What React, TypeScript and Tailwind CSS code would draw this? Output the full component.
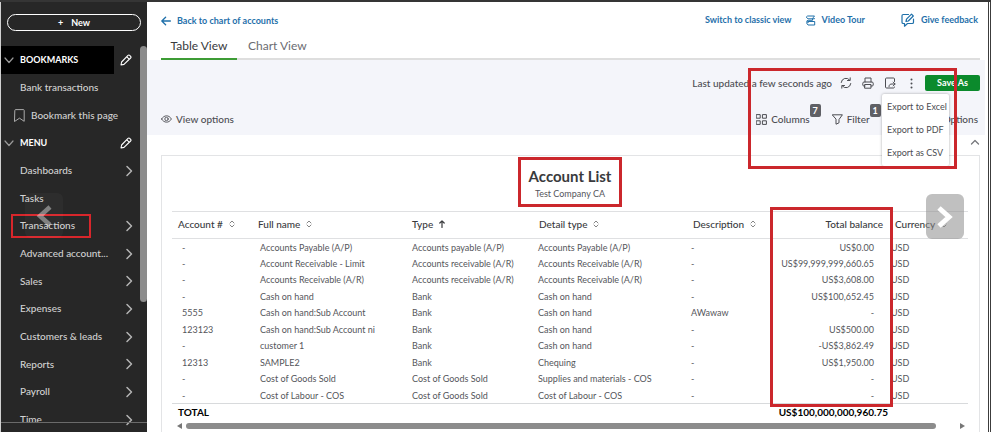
import type { ReactNode } from 'react';

type SvgProps = { className?: string; children: ReactNode; box?: string };

function Svg({ className = '', children, box = '0 0 16 16' }: SvgProps) {
  return (
    <svg
      viewBox={box}
      fill="none"
      stroke="currentColor"
      strokeLinecap="round"
      strokeLinejoin="round"
      aria-hidden="true"
      className={`shrink-0 ${className}`}
    >
      {children}
    </svg>
  );
}

const ChevronRight = () => (
  <Svg className="size-3 text-[#b4b4b4]" box="0 0 12 12">
    <path d="M4 1.5 8.5 6 4 10.5" strokeWidth="1.5" />
  </Svg>
);

const ChevronDown = () => (
  <Svg className="size-[10px] text-[#9a9a9a]" box="0 0 10 10">
    <path d="M1 3 5 7.5 9 3" strokeWidth="1.2" />
  </Svg>
);

const Pencil = () => (
  <Svg className="size-3 text-white" box="0 0 12 12">
    <path d="M1 11 1.6 8 8 1.4c.5-.5 1.2-.5 1.7 0l.9.9c.5.5.5 1.2 0 1.7L4 10.4ZM6.8 2.8l2.4 2.4" strokeWidth="1.1" />
  </Svg>
);

const SortIcon = () => (
  <Svg className="h-2 w-[6px] text-[#777]" box="0 0 6 8">
    <path d="M1 3 3 1l2 2M1 5l2 2 2-2" strokeWidth="0.9" />
  </Svg>
);

const rowHeight = 'h-7 nth-[3n]:h-[27px]';

function Heading({ label, dark }: { label: string; dark?: boolean }) {
  return (
    <li className={`${rowHeight} flex items-center justify-between pr-2`}>
      <button
        className={`flex h-full w-[113px] items-center gap-[6px] pl-[3px] text-[9px] font-bold text-white ${dark ? 'bg-black' : ''}`}
      >
        <ChevronDown />
        {label}
      </button>
      <button aria-label={`Edit ${label.toLowerCase()}`}>
        <Pencil />
      </button>
    </li>
  );
}

type ItemProps = { label: string; arrow?: boolean; marked?: boolean };

function Item({ label, arrow = true, marked }: ItemProps) {
  return (
    <li className={`${rowHeight} relative flex items-center pr-[5px] pb-[1px] pl-[19px]`}>
      <a href="#" className="flex flex-1 items-center justify-between">
        {label}
        {arrow && <ChevronRight />}
      </a>
      {marked && (
        <span className="pointer-events-none absolute top-[2px] left-[10px] h-6 w-20 border-2 border-[#d8262b]" />
      )}
    </li>
  );
}

function Sidebar() {
  return (
    <aside className="relative flex w-[147px] shrink-0 flex-col border-l border-[#d0d0d0] bg-[#272727] text-[10px] font-medium text-[#d2d2d2]">
      <div className="flex h-11 shrink-0 items-start px-[6px] pt-3">
        <button className="flex h-[17px] w-full items-center justify-center gap-2 rounded-full border border-white text-[9px] font-bold text-white">
          <span>+</span>
          <span>New</span>
        </button>
      </div>
      <div className="flex min-h-0 flex-1">
        <ul className="min-w-0 flex-1 overflow-hidden">
          <Heading label="BOOKMARKS" dark />
          <Item label="Bank transactions" arrow={false} />
          <li className={`${rowHeight} flex items-center pl-[13px]`}>
            <a href="#" className="flex items-center gap-[6px]">
              <Svg className="h-[13px] w-[11px] text-[#aaa]" box="0 0 11 13">
                <path d="M.8 1.3c0-.4.3-.7.7-.7h8c.4 0 .7.3.7.7v11L5.500 9.200.8 12.300Z" />
              </Svg>
              Bookmark this page
            </a>
          </li>
          <Heading label="MENU" />
          <Item label="Dashboards" />
          <Item label="Tasks" arrow={false} />
          <Item label="Transactions" marked />
          <Item label="Advanced account..." />
          <Item label="Sales" />
          <Item label="Expenses" />
          <Item label="Customers & leads" />
          <Item label="Reports" />
          <Item label="Payroll" />
          <Item label="Time" />
        </ul>
        <div className="w-[7px]">
          <div className="h-64 rounded-full bg-[#8c8c8c]" />
        </div>
      </div>
      <span className="pointer-events-none absolute inset-x-0 bottom-[9px] border-t border-[#6a6a6a]" />
      <button
        aria-label="Previous"
        className="absolute top-[191px] left-6 flex h-[45px] w-[38px] items-center justify-center rounded-md bg-white/3 text-white/40"
      >
        <Svg className="size-6" box="0 0 24 24">
          <path d="M18 3 8 12l10 9" strokeWidth="4.500" strokeLinecap="butt" strokeLinejoin="miter" />
        </Svg>
      </button>
    </aside>
  );
}

function TopBar() {
  return (
    <header className="bg-white pr-2 pl-[14px]">
      <div className="flex h-9 items-center justify-between text-[9px] font-bold text-[#1f70aa]">
        <a href="#" className="mt-[1px] flex items-center gap-[6px]">
          <Svg className="size-[10px]" box="0 0 10 10">
            <path d="M9.400 5H.8M4.600 1.200.8 5l3.800 3.800" strokeWidth="1.300" />
          </Svg>
          Back to chart of accounts
        </a>
        <div className="flex items-center pr-[2px]">
          <a href="#">Switch to classic view</a>
          <a href="#" className="ml-[14px] flex items-center gap-[5px]">
            <Svg className="size-[11px]" box="0 0 11 11">
              <path d="M3 1h6.500L8.300 2.400l1.200 1.400H3L1.500 2.400ZM7.500 3.800v1.500H3.200c-2 0-2 2.200 0 2.200M3 6.500h6.700v3.500H3L1.800 8.300Z" />
            </Svg>
            Video Tour
          </a>
          <a href="#" className="ml-9 flex items-center gap-[6px]">
            <Svg className="size-[14px]" box="0 0 14 14">
              <path d="M7.500 1.500H2.300c-.8 0-1.300.5-1.300 1.300v6.400c0 .8.500 1.300 1.300 1.300h1.200v2.700l3-2.700h4.700c.8 0 1.300-.5 1.300-1.300V6" strokeWidth="1.200" />
              <path d="m5 8.500.5-2.300 5-5 1.800 1.800-5 5Z" strokeWidth="1.200" />
            </Svg>
            Give feedback
          </a>
        </div>
      </div>
      <nav role="tablist" className="flex h-[22px] border-b-2 border-[#dedede] text-xs leading-4 text-[#6b6c72]">
        <button role="tab" aria-selected="true" className="-mb-[2px] w-[76px] border-b-2 border-[#3d9c35] pb-1 text-[#393a3d]">
          Table View
        </button>
        <button role="tab" aria-selected="false" className="-mb-[2px] border-b-2 border-transparent px-[11px] pb-1">
          Chart View
        </button>
      </nav>
    </header>
  );
}

function Counter({ children }: { children: ReactNode }) {
  return (
    <span className="-mt-[17px] flex h-[13px] w-[11px] items-center justify-center rounded-[2px] bg-[#5f6065] text-[9px] font-bold text-white">
      {children}
    </span>
  );
}

function Toolbar() {
  return (
    <section className="relative mr-[3px] h-[75px] bg-[#f4f5fa] pr-[5px] pl-[14px] text-[10px] font-medium text-[#4c4d52]">
      <div className="flex h-[46px] items-center justify-end">
        <span className="mr-2">Last updated a few seconds ago</span>
        <button aria-label="Refresh" className="mr-[10px]">
          <Svg className="size-3" box="0 0 12 12">
            <path d="M1.200 5.500A4.800 4.800 0 0 1 9.800 3.200M10.800 6.500A4.800 4.800 0 0 1 2.200 8.800M10.200.8v2.700H7.500M1.800 11.200V8.500h2.700" strokeWidth="1" />
          </Svg>
        </button>
        <button aria-label="Print" className="mr-[10px]">
          <Svg className="size-3" box="0 0 12 12">
            <path d="M3 5V1h6v4M3 9H1.800C1.200 9 .8 8.600.8 8V6.200C.8 5.500 1.300 5 2 5h8c.7 0 1.200.5 1.200 1.200V8c0 .6-.4 1-1 1H9M3 7.500h6v3.700H3Z" strokeWidth="1" />
          </Svg>
        </button>
        <button aria-label="Export" className="mr-[14px]">
          <Svg className="size-3" box="0 0 12 12">
            <path d="M10.500 4.500V2c0-.6-.4-1-1-1h-7c-.6 0-1 .4-1 1v8c0 .6.400 1 1 1h7c.6 0 1-.4 1-1M5 9.500c0-1.800 1.200-2.500 3-2.500h3M9.200 5.100 11.100 7 9.200 8.900" strokeWidth="1" />
          </Svg>
        </button>
        <button aria-label="More" className="mr-3">
          <Svg className="h-[11px] w-[3px]" box="0 0 3 11">
            <path d="M1.500 1.500v0M1.500 5.500v0M1.500 9.500v0" strokeWidth="2" />
          </Svg>
        </button>
        <button className="h-4 w-[55px] rounded-[2px] bg-[#0b8a2c] text-[9px] font-bold text-white">Save As</button>
      </div>
      <div className="flex h-[26px] items-center">
        <button className="mr-auto flex items-center gap-1">
          <Svg className="h-2 w-[11px]" box="0 0 11 8">
            <path d="M.6 4C3 -.3 8 -.3 10.400 4 8 8.300 3 8.300.6 4Z" strokeWidth="0.9" />
            <circle cx="5.500" cy="4" r="1.700" strokeWidth="0.900" />
          </Svg>
          View options
        </button>
        <button className="flex items-center">
          <Svg className="mr-1 size-[11px]" box="0 0 11 11">
            <path d="M.6.6h3.600v3.600H.6ZM6.800.6h3.600v3.600H6.800ZM.6 6.800h3.600v3.600H.6ZM6.800 6.800h3.600v3.600H6.800Z" />
          </Svg>
          Columns
          <Counter>7</Counter>
        </button>
        <button className="ml-[11px] flex items-center">
          <Svg className="mr-1 size-[11px]" box="0 0 11 11">
            <path d="M.6.8h9.800L7 5.500v3.300l-3 1.400V5.500Z" />
          </Svg>
          Filter
          <Counter>1</Counter>
        </button>
        <button className="mr-[2px] ml-[62px]">Options</button>
      </div>
      <div
        role="menu"
        className="absolute top-[34px] right-9 z-10 flex h-[72px] w-[67px] flex-col justify-between rounded-[2px] bg-white py-[5px] text-[9px] font-normal shadow-[0_0_3px_#0005]"
      >
        {['Export to Excel', 'Export to PDF', 'Export as CSV'].map((label) => (
          <button key={label} role="menuitem" className="h-4 pl-[5px] text-left whitespace-nowrap">
            {label}
          </button>
        ))}
      </div>
      <span className="pointer-events-none absolute top-2 right-7 z-20 h-[101px] w-[209px] border-3 border-[#cb272c]" />
    </section>
  );
}

const columns = [
  { label: 'Account #', width: 'w-[80px]' },
  { label: 'Full name', width: 'w-[154px]' },
  { label: 'Type', width: 'w-[127px]' },
  { label: 'Detail type', width: 'w-[154px]' },
  { label: 'Description', width: 'w-[86px]' },
  { label: 'Total balance', width: 'w-[116px]' },
  { label: 'Currency', width: 'w-[79px]' },
];

const accounts = [
  ['-', 'Accounts Payable (A/P)', 'Accounts payable (A/P)', 'Accounts Payable (A/P)', '-', 'US$0.00'],
  ['-', 'Account Receivable - Limit', 'Accounts receivable (A/R)', 'Accounts Receivable (A/R)', '-', 'US$99,999,999,660.65'],
  ['-', 'Accounts Receivable (A/R)', 'Accounts receivable (A/R)', 'Accounts Receivable (A/R)', '-', 'US$3,608.00'],
  ['-', 'Cash on hand', 'Bank', 'Cash on hand', '-', 'US$100,652.45'],
  ['5555', 'Cash on hand:Sub Account', 'Bank', 'Cash on hand', 'AWawaw', '-'],
  ['123123', 'Cash on hand:Sub Account ni', 'Bank', 'Cash on hand', '-', 'US$500.00'],
  ['-', 'customer 1', 'Bank', 'Cash on hand', '-', '-US$3,862.49'],
  ['12313', 'SAMPLE2', 'Bank', 'Chequing', '-', 'US$1,950.00'],
  ['-', 'Cost of Goods Sold', 'Cost of Goods Sold', 'Supplies and materials - COS', '-', '-'],
  ['-', 'Cost of Labour - COS', 'Cost of Goods Sold', 'Cost of Labour - COS', '-', '-'],
];

function AccountTable() {
  return (
    <div className="relative">
      <table className="w-full table-fixed border-collapse text-[9px] whitespace-nowrap text-[#55565b]">
        <thead>
          <tr className="h-[27px] border-y border-[#dfe0e2] text-[10px] text-[#393a3d]">
            {columns.map(({ label, width }) => (
              <th key={label} className={`${width} p-0 pb-[2px] font-medium`}>
                <span className={`flex items-center gap-[6px] pl-[6px] ${label === 'Total balance' ? 'justify-end pr-[6px]' : ''}`}>
                  {label}
                  {label === 'Type' ? (
                    <Svg className="h-2 w-[6px]" box="0 0 6 8">
                      <path d="M3 7.500V1M.8 3 3 .8 5.200 3" strokeWidth="1.200" />
                    </Svg>
                  ) : (
                    label !== 'Total balance' && <SortIcon />
                  )}
                </span>
              </th>
            ))}
          </tr>
        </thead>
        <tbody>
          {accounts.map(([number, name, type, detail, description, balance], index) => (
            <tr key={index} className="h-[17px] even:h-4">
              <td className="p-0 pl-[10px]">{number}</td>
              <td className="p-0 pl-2">{name}</td>
              <td className="p-0 pl-[6px]">{type}</td>
              <td className="p-0 pl-[5px]">{detail}</td>
              <td className="p-0 pl-1">{description}</td>
              <td className="p-0 pr-[15px] text-right">{balance}</td>
              <td className="p-0 pl-[2px]">USD</td>
            </tr>
          ))}
        </tbody>
        <tfoot>
          <tr className="h-[18px] border-t border-[#d8dadc] text-[10px] font-bold text-black">
            <td className="p-0 pl-[6px]">TOTAL</td>
            <td colSpan={4} className="p-0" />
            <td className="p-0">
              <span className="flex justify-end pr-[1px]">US$100,000,000,960.75</span>
            </td>
            <td className="p-0" />
          </tr>
        </tfoot>
      </table>
      <span className="pointer-events-none absolute -top-1 right-[75px] h-[200px] w-[123px] border-3 border-[#cb272c]" />
    </div>
  );
}

function Report() {
  return (
    <section className="mr-2 ml-[14px] flex-1 border-x border-t border-[#e3e4e6] bg-white pr-[11px] pl-[10px]">
      <div className="flex h-[55px] justify-center pt-[1px]">
        <div className="flex h-[50px] w-[104px] flex-col items-center justify-center border-3 border-[#cb272c] pt-1 whitespace-nowrap">
          <h1 className="text-[15px] leading-5 font-bold text-[#393a3d]">Account List</h1>
          <p className="text-[9px] leading-4 text-[#55565b]">Test Company CA</p>
        </div>
      </div>
      <AccountTable />
      <div className="flex h-2 items-center justify-between gap-1 pr-[3px] pl-[5px]">
        <svg viewBox="0 0 5 6" className="h-[6px] w-[5px] fill-[#777]" aria-hidden="true">
          <path d="M5 0v6L0 3Z" />
        </svg>
        <div className="mr-5 h-[6px] flex-1 rounded-full bg-[#8c8c8c]" />
        <svg viewBox="0 0 5 6" className="h-[6px] w-[5px] fill-[#777]" aria-hidden="true">
          <path d="M0 0v6l5-3Z" />
        </svg>
      </div>
    </section>
  );
}

export default function App() {
  return (
    <div className="relative flex h-screen overflow-hidden border-t-2 border-[#353535] bg-white font-[Lato,sans-serif]">
      <Sidebar />
      <main className="flex min-w-0 flex-1 flex-col border-r-3 border-double border-[#3c3c3c]">
        <TopBar />
        <Toolbar />
        <div className="flex h-5 shrink-0 items-center justify-end pr-[7px] pb-[6px]">
          <button aria-label="Collapse" className="text-[#77787d]">
            <Svg className="size-3" box="0 0 12 12">
              <path d="m2.500 8 3.500-3.500L9.500 8" strokeWidth="1.300" />
            </Svg>
          </button>
        </div>
        <Report />
      </main>
      <button
        aria-label="Next"
        className="absolute top-[192px] right-[27px] flex h-[45px] w-[38px] items-center justify-center rounded-md bg-[#8c8c8c]/55 text-white"
      >
        <Svg className="size-6" box="0 0 24 24">
          <path d="m6 3 10 9-10 9" strokeWidth="5" strokeLinecap="butt" strokeLinejoin="miter" />
        </Svg>
      </button>
    </div>
  );
}
